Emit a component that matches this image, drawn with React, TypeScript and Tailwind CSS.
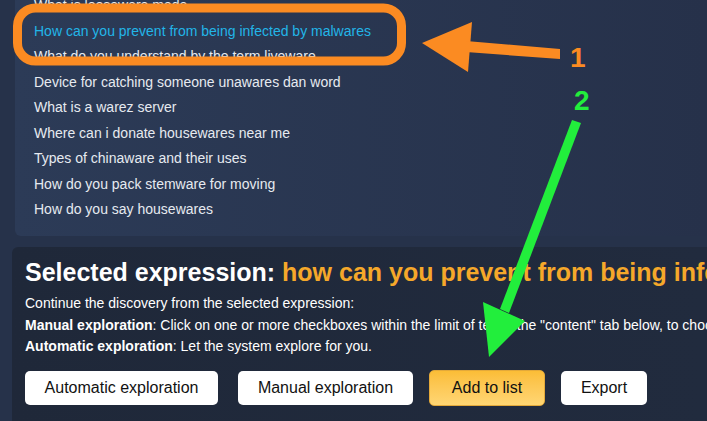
import React from "react";

const items = [
  "What is looseware made",
  "How can you prevent from being infected by malwares",
  "What do you understand by the term liveware",
  "Device for catching someone unawares dan word",
  "What is a warez server",
  "Where can i donate housewares near me",
  "Types of chinaware and their uses",
  "How do you pack stemware for moving",
  "How do you say housewares",
];

function Annotations() {
  return (
    <svg
      className="pointer-events-none absolute inset-0"
      width="707"
      height="421"
      viewBox="0 0 707 421"
    >
      {/* 1: orange frame + arrow */}
      <rect x="17.5" y="8" width="384" height="53" rx="18" fill="none" stroke="#fb8b22" strokeWidth="9" />
      <polygon points="422,43 472,22 468,72" fill="#fb8b22" />
      <polygon points="466,41 560,49 560,59 466,52" fill="#fb8b22" />
      <text x="570" y="67" fill="#fb8b22" fontSize="28" fontWeight="700" fontFamily="Liberation Sans, Arial, sans-serif">
        1
      </text>
      {/* 2: green arrow */}
      <text x="574" y="110" fill="#22ee3c" fontSize="28" fontWeight="700" fontFamily="Liberation Sans, Arial, sans-serif">
        2
      </text>
      <polygon points="572,120 581,123 509,313 500,309" fill="#22ee3c" />
      <polygon points="483,302 525,321 489,357" fill="#22ee3c" />
    </svg>
  );
}

export default function App() {
  return (
    <div className="relative h-[421px] w-[707px] overflow-hidden bg-[#26324a] font-['Liberation_Sans',Arial,sans-serif]">
      <div className="flex h-full flex-col">
        {/* ── Suggestions list ── */}
        <div className="-mt-[7px] ml-[15px] h-[243px] shrink-0 rounded-bl-md bg-linear-to-r from-[#2c3b57] to-[#26314a] pl-[19px]">
          {items.map((t, i) => (
            <div
              key={i}
              className={`whitespace-nowrap text-[14px] leading-[25.5px] ${i === 1 ? "text-[#22b5e8]" : "text-[#e6eaf0]"}`}
            >
              {t}
            </div>
          ))}
        </div>

        {/* ── Selected expression ── */}
        <div className="ml-[12px] mt-[11px] flex-1 overflow-hidden whitespace-nowrap rounded-tl-md bg-linear-to-r from-[#1f2839] to-[#212b3e] pl-[13px] pt-[10px]">
          <h2 className="text-[25px] font-bold leading-[30px] text-white">
            Selected expression: <span className="text-[#f5a82a]">how can you prevent from being infected by malwares</span>
          </h2>
          <div className="mt-[6px] text-[14px] leading-[21.5px] text-white">
            <p>Continue the discovery from the selected expression:</p>
            <p>
              <b>Manual exploration</b>: Click on one or more checkboxes within the limit of ten in the "content" tab below, to choose the expressions to explore.
            </p>
            <p>
              <b>Automatic exploration</b>: Let the system explore for you.
            </p>
          </div>
          <div className="mt-[12.5px] flex items-center text-[16px] text-[#111]">
            <button className="flex h-[34px] w-[193px] items-center justify-center rounded-[5px] bg-white">
              Automatic exploration
            </button>
            <button className="ml-[20px] flex h-[34px] w-[175px] items-center justify-center rounded-[5px] bg-white">
              Manual exploration
            </button>
            <button className="ml-[16px] flex h-[36px] w-[116px] items-center justify-center rounded-[5px] border border-[#e3a93a] bg-linear-to-b from-[#fbbd36] to-[#ffd673]">
              Add to list
            </button>
            <button className="ml-[16px] flex h-[34px] w-[86px] items-center justify-center rounded-[5px] bg-white">
              Export
            </button>
          </div>
        </div>
      </div>
      <Annotations />
    </div>
  );
}
